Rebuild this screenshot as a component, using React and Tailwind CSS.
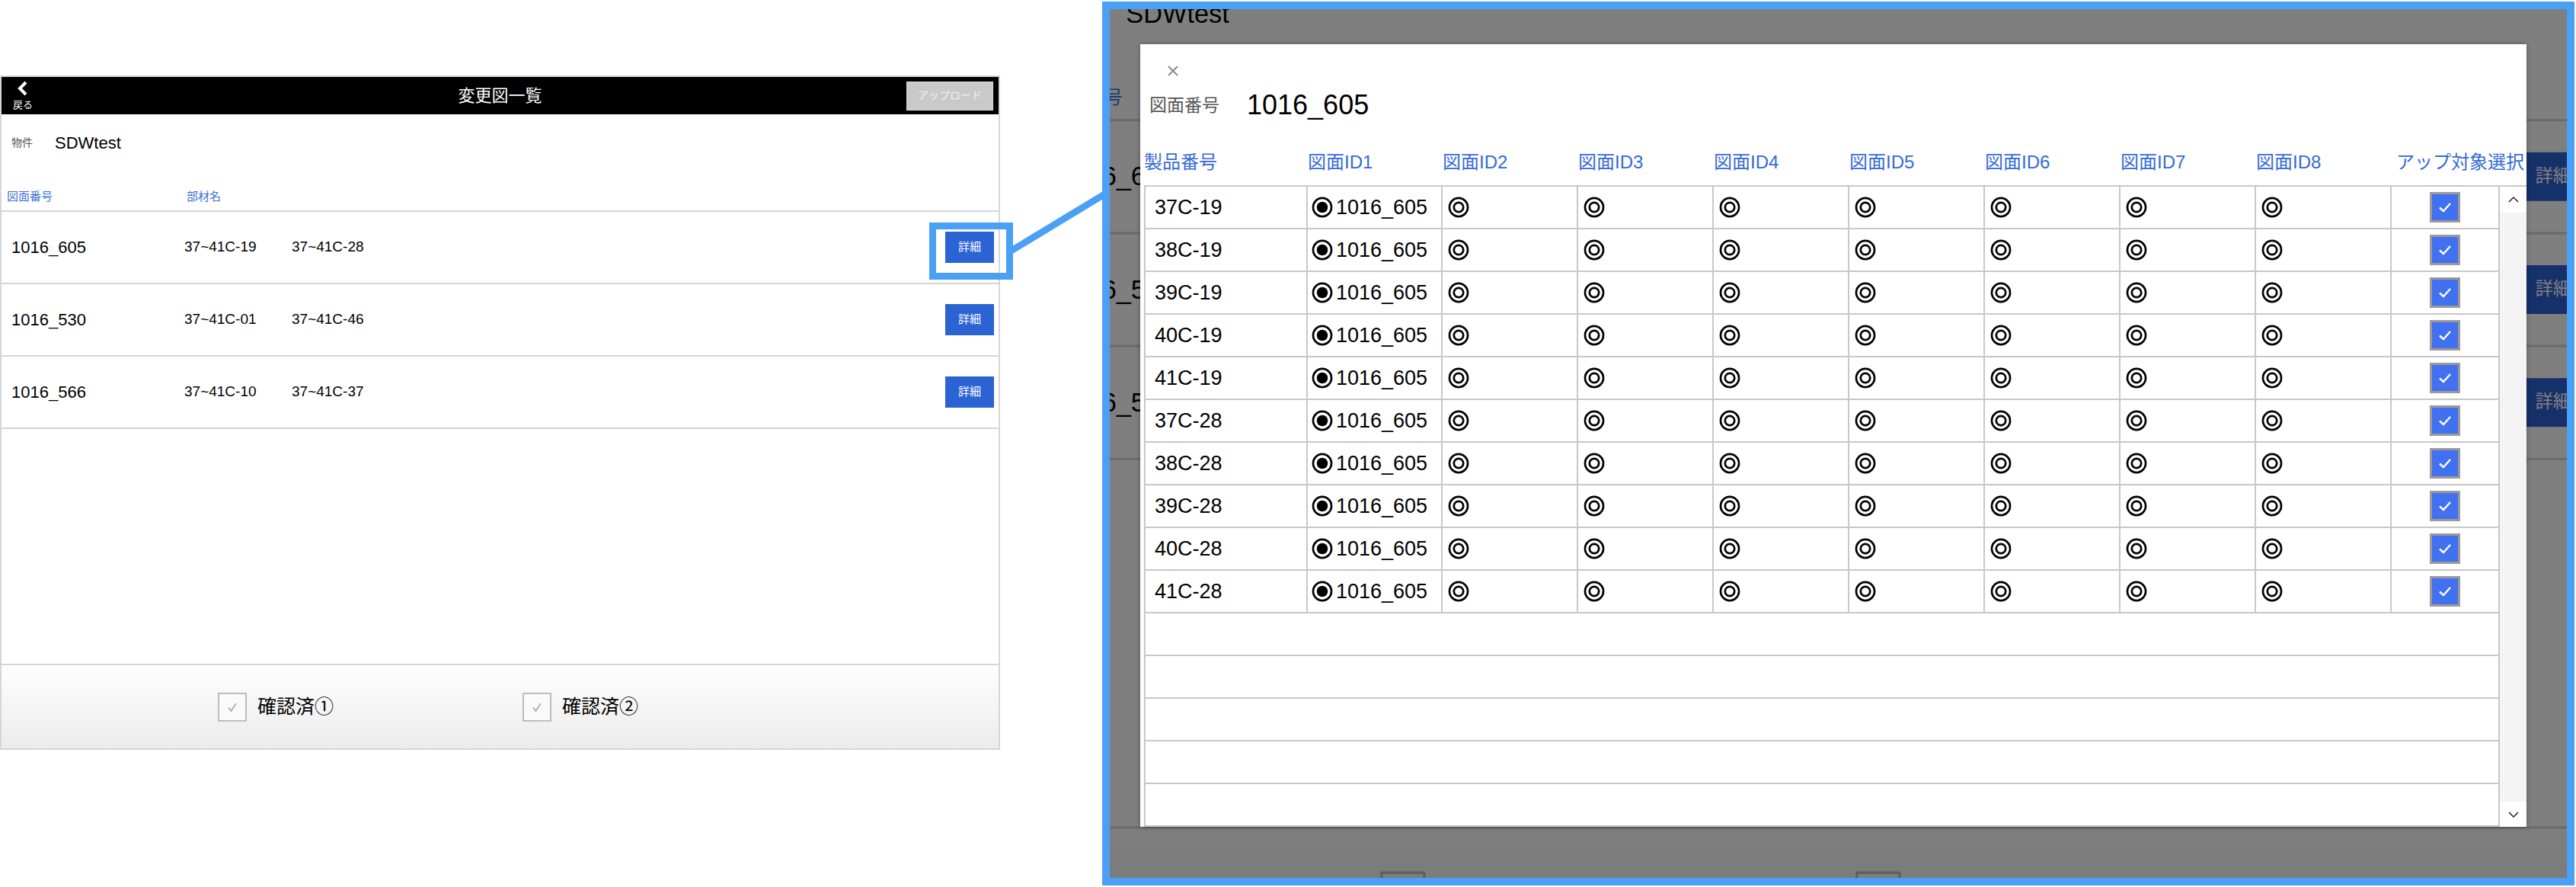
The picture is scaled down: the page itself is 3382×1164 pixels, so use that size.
import React from "react";

const FRAME = "#4aa0f5";
const LINE = "border-[#d6d6d6]";

const listRows = [
  { no: "1016_605", a: "37~41C-19", b: "37~41C-28" },
  { no: "1016_530", a: "37~41C-01", b: "37~41C-46" },
  { no: "1016_566", a: "37~41C-10", b: "37~41C-37" },
];

const parts = ["37C-19", "38C-19", "39C-19", "40C-19", "41C-19", "37C-28", "38C-28", "39C-28", "40C-28", "41C-28"];

// 図面ID2〜ID8 の列
const idCols = [2, 3, 4, 5, 6, 7, 8];

function BackIcon() {
  return (
    <svg width="16" height="20" viewBox="0 0 16 20">
      <polyline points="12,2 4,10 12,18" fill="none" stroke="#fff" strokeWidth="4" />
    </svg>
  );
}

function CheckItem({ label, wide }) {
  return (
    <div className={wide ? "w-[400px] flex items-center gap-[14px]" : "flex items-center gap-[14px]"}>
      <div className="w-[38px] h-[38px] border-2 border-[#bdbdbd] bg-[#fafafa] flex items-center justify-center">
        <svg width="16" height="16" viewBox="0 0 16 16">
          <polyline points="3,8.5 6.5,13 13,3" fill="none" stroke="#a8a8a8" strokeWidth="1.6" />
        </svg>
      </div>
      <span className="text-[25px] text-black">{label}</span>
    </div>
  );
}

// 一覧画面（左側・背景で共用）
function ListPage() {
  return (
    <div className={`w-[1313px] h-[885px] shrink-0 border-2 ${LINE} bg-white flex flex-col`}>
      <div className="h-[49px] bg-black grid grid-cols-[1fr_auto_1fr] items-center">
        <div className="w-[56px] flex flex-col items-center">
          <BackIcon />
          <span className="text-[13px] leading-[16px] text-white mt-[4px]">戻る</span>
        </div>
        <div className="text-[22px] text-white">変更図一覧</div>
        <div className="flex justify-end pr-[7px]">
          <div className="w-[114px] h-[38px] bg-[#c9c9c9] border border-[#dedede] flex items-center justify-center text-[14px] text-[#f2f2f2]">
            アップロード
          </div>
        </div>
      </div>

      <div className="h-[74px] flex items-center pl-[13px]">
        <span className="w-[57px] text-[14px] text-[#555]">物件</span>
        <span className="text-[22px] text-black">SDWtest</span>
      </div>
      <div className={`h-[54px] pt-[24px] flex text-[15px] leading-[20px] text-[#3a6fd6] border-b-2 ${LINE}`}>
        <span className="w-[243px] pl-[7px]">図面番号</span>
        <span>部材名</span>
      </div>

      {listRows.map((r) => (
        <div key={r.no} className={`h-[95px] flex items-center border-b-2 ${LINE}`}>
          <span className="w-[240px] pl-[13px] text-[22px] text-black">{r.no}</span>
          <span className="w-[141px] text-[19px] text-black">{r.a}</span>
          <span className="text-[19px] text-black">{r.b}</span>
          <div className="ml-auto mr-[6px] w-[64px] h-[41px] bg-[#2c63d3] text-white text-[15px] flex items-center justify-center">
            詳細
          </div>
        </div>
      ))}

      <div className={`mt-auto h-[111px] border-t-2 ${LINE} bg-linear-to-b from-[#fefefe] to-[#ececec] flex items-center pl-[284px]`}>
        <CheckItem label="確認済①" wide />
        <CheckItem label="確認済②" />
      </div>
    </div>
  );
}

function RadioOn() {
  return (
    <svg width="28" height="28" viewBox="0 0 27 27" className="shrink-0">
      <circle cx="13.5" cy="13.5" r="11.6" fill="none" stroke="#000" strokeWidth="2.6" />
      <circle cx="13.5" cy="13.5" r="7" fill="#000" />
    </svg>
  );
}

function DoubleCircle() {
  return (
    <svg width="28" height="28" viewBox="0 0 27 27" className="shrink-0">
      <circle cx="13.5" cy="13.5" r="11.6" fill="none" stroke="#000" strokeWidth="2.6" />
      <circle cx="13.5" cy="13.5" r="6" fill="none" stroke="#000" strokeWidth="2.6" />
    </svg>
  );
}

function BlueCheck() {
  return (
    <div className="w-[40px] h-[40px] border-[3px] border-[#9a9a9a] bg-[#4170f0] flex items-center justify-center">
      <svg width="18" height="14" viewBox="0 0 18 14">
        <polyline points="2,7.5 7,12 16,2" fill="none" stroke="#fff" strokeWidth="2.4" />
      </svg>
    </div>
  );
}

function Dialog() {
  return (
    <div className="w-[1820px] h-[1027px] bg-white flex flex-col pl-[5px] shadow-[0_0_6px_rgba(0,0,0,0.35)]">
      <div className="h-[60px] pt-[10px] pl-[30px] flex items-center">
        <svg width="16" height="16" viewBox="0 0 16 16">
          <path d="M2 2 L14 14 M14 2 L2 14" stroke="#8a8a8a" strokeWidth="2" />
        </svg>
      </div>
      <div className="h-[40px] flex items-center pl-[7px]">
        <span className="w-[128px] text-[23px] text-[#555]">図面番号</span>
        <span className="text-[36px] text-black">1016_605</span>
      </div>

      <div className="mt-[35px] h-[40px] flex items-center text-[24px] text-[#356ad6] whitespace-nowrap">
        <span className="w-[215px]">製品番号</span>
        <span className="w-[177px]">図面ID1</span>
        {idCols.map((n) => (
          <span key={n} className="w-[178px]">図面ID{n}</span>
        ))}
        <span className="w-[140px] pl-[6px]">アップ対象選択</span>
      </div>

      <div className="mt-[10px] flex-1 min-h-0 flex border-t-2 border-[#c8c8c8] overflow-hidden">
        <div className="w-[1778px] border-l-2 border-[#c8c8c8] flex flex-col">
          {parts.map((p) => (
            <div key={p} className="h-[56px] shrink-0 flex border-b-2 border-[#c8c8c8] text-[27px] text-black">
              <div className="w-[213px] border-r-2 border-[#c8c8c8] flex items-center pl-[12px]">{p}</div>
              <div className="w-[177px] border-r-2 border-[#c8c8c8] flex items-center pl-[5px] gap-[4px]">
                <RadioOn />
                <span>1016_605</span>
              </div>
              {idCols.map((n) => (
                <div key={n} className="w-[178px] border-r-2 border-[#c8c8c8] flex items-center pl-[7px]">
                  <DoubleCircle />
                </div>
              ))}
              <div className="w-[140px] flex items-center justify-center">
                <BlueCheck />
              </div>
            </div>
          ))}
          {[0, 1, 2, 3, 4].map((i) => (
            <div key={i} className="h-[56px] shrink-0 border-b-2 border-[#c8c8c8]" />
          ))}
        </div>
        <div className="w-[37px] border-l-2 border-[#c8c8c8] bg-[#f4f4f4] flex flex-col justify-between">
          <div className="h-[34px] bg-white flex items-center justify-center">
            <svg width="16" height="10" viewBox="0 0 16 10">
              <polyline points="2,8 8,2 14,8" fill="none" stroke="#222" strokeWidth="1.5" />
            </svg>
          </div>
          <div className="h-[33px] bg-white flex items-center justify-center">
            <svg width="16" height="10" viewBox="0 0 16 10">
              <polyline points="2,2 8,8 14,2" fill="none" stroke="#222" strokeWidth="1.5" />
            </svg>
          </div>
        </div>
      </div>
    </div>
  );
}

export default function App() {
  return (
    <div className="relative w-[3382px] h-[1164px] bg-white overflow-hidden flex items-start font-['Liberation_Sans','Noto_Sans_CJK_JP',sans-serif]">
      <div className="mt-[99px]">
        <ListPage />
      </div>

      {/* 拡大表示の枠（背景は一覧画面を拡大して暗くしたもの） */}
      <div className="ml-[134px] mt-[2px] w-[1933px] h-[1160px] shrink-0 border-[10px] border-[#4aa0f5] relative overflow-hidden bg-white">
        <div className="-ml-[91px] -mt-[132px] origin-top-left scale-[1.56]">
          <ListPage />
        </div>
        <div className="absolute inset-0 bg-black/50 pl-[40px] pt-[46px]">
          <Dialog />
        </div>
      </div>

      {/* 注記: 詳細ボタンの囲みと引き出し線 */}
      <div className="absolute left-[1220px] top-[292px] w-[110px] h-[75px] border-[9px] border-[#4aa0f5]" />
      <svg className="absolute left-0 top-0 pointer-events-none" width="3382" height="1164">
        <line x1="1326" y1="330" x2="1450" y2="255" stroke={FRAME} strokeWidth="9" />
      </svg>
    </div>
  );
}
